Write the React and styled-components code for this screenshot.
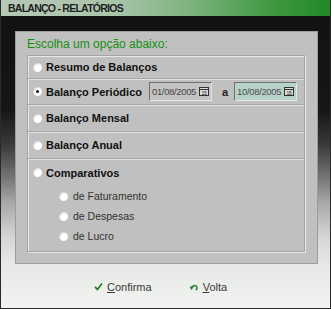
import React, { useState } from "react";
import styled, { createGlobalStyle } from "styled-components";

const GlobalStyle = createGlobalStyle`
  html, body {
    margin: 0;
    padding: 0;
    background: #f3f4f2;
  }
  body {
    font-family: "Liberation Sans", Arial, sans-serif;
  }
`;

const Window = styled.div`
  width: 331px;
  height: 309px;
  box-sizing: border-box;
  border-left: 1px solid #2a2a2a;
  border-right: 1px solid #2a2a2a;
  border-bottom: 1px solid #2a2a2a;
  display: flex;
  flex-direction: column;
  overflow: hidden;
`;

const TitleBar = styled.div`
  height: 16px;
  flex: none;
  display: flex;
  align-items: center;
  padding-left: 7px;
  background: linear-gradient(
    to right,
    #b6c8b6 0%,
    #aac4aa 35%,
    #72b072 62%,
    #3a963c 85%,
    #22882a 100%
  );
  font-size: 10.5px;
  font-weight: bold;
  letter-spacing: -0.75px;
  color: #1e1e1e;
`;

const Body = styled.div`
  flex: 1;
  display: flex;
  flex-direction: column;
  padding: 15px 12px 0 14px;
  background: linear-gradient(
    to bottom,
    #121212 0%,
    #161616 32%,
    #3a3a3a 44%,
    #7a7a7a 56%,
    #a8aaa8 64%,
    #d6d8d6 76%,
    #e6e9e6 85%,
    #f3f4f2 100%
  );
`;

const Panel = styled.div`
  height: 233px;
  box-sizing: border-box;
  background: #c0c0c0;
  border: 1px solid #9c9c9c;
  padding: 4px 12px 0 11px;
  display: flex;
  flex-direction: column;
`;

const Heading = styled.div`
  font-size: 12px;
  line-height: 17px;
  color: #129012;
  margin-bottom: 2px;
`;

const OptionBox = styled.div`
  border: 1px solid #a4a4a4;
  box-shadow: 1px 1px 0 #e8e8e8, inset 1px 1px 0 #e8e8e8;
  display: flex;
  flex-direction: column;
`;

const Row = styled.label`
  height: ${(p) => p.$h}px;
  display: flex;
  align-items: center;
  padding-left: ${(p) => (p.$sub ? 31 : 5)}px;
  gap: ${(p) => (p.$sub ? 5 : 4)}px;
  border-top: ${(p) => (p.$sep ? "1px solid #a6a6a6" : "none")};
  box-shadow: ${(p) => (p.$sep ? "inset 0 1px 0 #e2e2e2" : "none")};
  white-space: nowrap;
  cursor: default;
`;

const Group = styled.div`
  display: flex;
  flex-direction: column;
  border-top: 1px solid #a6a6a6;
  box-shadow: inset 0 1px 0 #e2e2e2;
  padding-bottom: 5px;
`;

const Radio = styled.span`
  width: 9px;
  height: 9px;
  flex: none;
  border-radius: 50%;
  position: relative;
  background: radial-gradient(
    circle at 62% 62%,
    #ffffff 0 40%,
    #e4e4e4 65%,
    #8a8a8a 100%
  );
  &::after {
    content: "";
    display: ${(p) => (p.$checked ? "block" : "none")};
    position: absolute;
    left: 3px;
    top: 3px;
    width: 3px;
    height: 3px;
    border-radius: 50%;
    background: #111;
  }
`;

const Label = styled.span`
  flex: none;
  font-size: ${(p) => (p.$sub ? 10.5 : 11)}px;
  font-weight: ${(p) => (p.$sub ? "normal" : "bold")};
  color: ${(p) => (p.$sub ? "#333" : "#111")};
`;

const DateField = styled.div`
  flex: none;
  margin-left: ${(p) => p.$ml || 0}px;
  width: 63px;
  height: 19px;
  box-sizing: border-box;
  display: flex;
  align-items: center;
  justify-content: space-between;
  padding: 0 2px 0 2px;
  background: ${(p) => (p.$active ? "#b6d2ca" : "#c4c4c4")};
  border-top: 1px solid #6e6e6e;
  border-left: 1px solid #6e6e6e;
  border-right: 1px solid #e6e6e6;
  border-bottom: 1px solid #e6e6e6;
  font-size: 9.5px;
  letter-spacing: -0.35px;
  color: ${(p) => (p.$active ? "#505050" : "#464646")};
`;

const CalButton = styled.span`
  display: flex;
  width: 10px;
  height: 9px;
`;

const Sep = styled.span`
  flex: none;
  margin: 0 2px 0 6px;
  font-size: 11px;
  font-weight: bold;
  color: #222;
`;

const Footer = styled.div`
  height: 45px;
  display: flex;
  align-items: center;
  padding-left: 79px;
  gap: 37px;
`;

const Action = styled.button`
  border: none;
  background: none;
  padding: 0;
  display: flex;
  align-items: center;
  gap: ${(p) => p.$gap}px;
  font-family: "Liberation Sans", Arial, sans-serif;
  font-size: 11px;
  color: #3a3a3a;
  cursor: pointer;
`;

const CalIcon = () => (
  <CalButton>
    <svg width="10" height="9" viewBox="0 0 10 9">
      <rect x="0.5" y="0.5" width="9" height="8" fill="#dcdcdc" stroke="#333" />
      <line x1="1" y1="2.5" x2="9" y2="2.5" stroke="#333" />
      <text x="5" y="7.6" fontSize="5" textAnchor="middle" fill="#222" fontFamily="Liberation Sans">
        15
      </text>
    </svg>
  </CalButton>
);

const CheckIcon = () => (
  <svg width="9" height="9" viewBox="0 0 9 9">
    <path d="M1 4.8 L3.4 7.4 L8 1.4" fill="none" stroke="#1f7a1f" strokeWidth="1.7" />
  </svg>
);

const BackIcon = () => (
  <svg width="9" height="8" viewBox="0 0 9 8">
    <path d="M3.2 4.6 C3.6 2 7.6 1.4 8 4.4 C8.2 5.8 7.4 6.8 6.6 7.2" fill="none" stroke="#2a7f2a" strokeWidth="1.5" />
    <path d="M0.6 3.4 L4.6 3.2 L2.6 7.2 Z" fill="#2a7f2a" />
  </svg>
);

const options = [
  { id: "resumo", label: "Resumo de Balanços", h: 22 },
  { id: "periodico", label: "Balanço Periódico", h: 25, dates: true },
  { id: "mensal", label: "Balanço Mensal", h: 26 },
  { id: "anual", label: "Balanço Anual", h: 26 },
];

const subOptions = ["de Faturamento", "de Despesas", "de Lucro"];

export default function App() {
  const [selected, setSelected] = useState("periodico");

  return (
    <>
      <GlobalStyle />
      <Window>
        <TitleBar>BALANÇO - RELATÓRIOS</TitleBar>
        <Body>
          <Panel>
            <Heading>Escolha um opção abaixo:</Heading>
            <OptionBox>
              {options.map((o, i) => (
                <Row key={o.id} $h={o.h} $sep={i > 0} onClick={() => setSelected(o.id)}>
                  <Radio $checked={selected === o.id} />
                  <Label>{o.label}</Label>
                  {o.dates && (
                    <>
                      <DateField $ml={3}>
                        01/08/2005
                        <CalIcon />
                      </DateField>
                      <Sep>a</Sep>
                      <DateField $active>
                        10/08/2005
                        <CalIcon />
                      </DateField>
                    </>
                  )}
                </Row>
              ))}
              <Group>
                <Row $h={27} onClick={() => setSelected("comparativos")}>
                  <Radio $checked={selected === "comparativos"} />
                  <Label>Comparativos</Label>
                </Row>
                {subOptions.map((s) => (
                  <Row key={s} $h={20} $sub onClick={() => setSelected(s)}>
                    <Radio $checked={selected === s} />
                    <Label $sub>{s}</Label>
                  </Row>
                ))}
              </Group>
            </OptionBox>
          </Panel>
          <Footer>
            <Action $gap={4}>
              <CheckIcon />
              <span>
                <u>C</u>onfirma
              </span>
            </Action>
            <Action $gap={5}>
              <BackIcon />
              <span>
                <u>V</u>olta
              </span>
            </Action>
          </Footer>
        </Body>
      </Window>
    </>
  );
}
